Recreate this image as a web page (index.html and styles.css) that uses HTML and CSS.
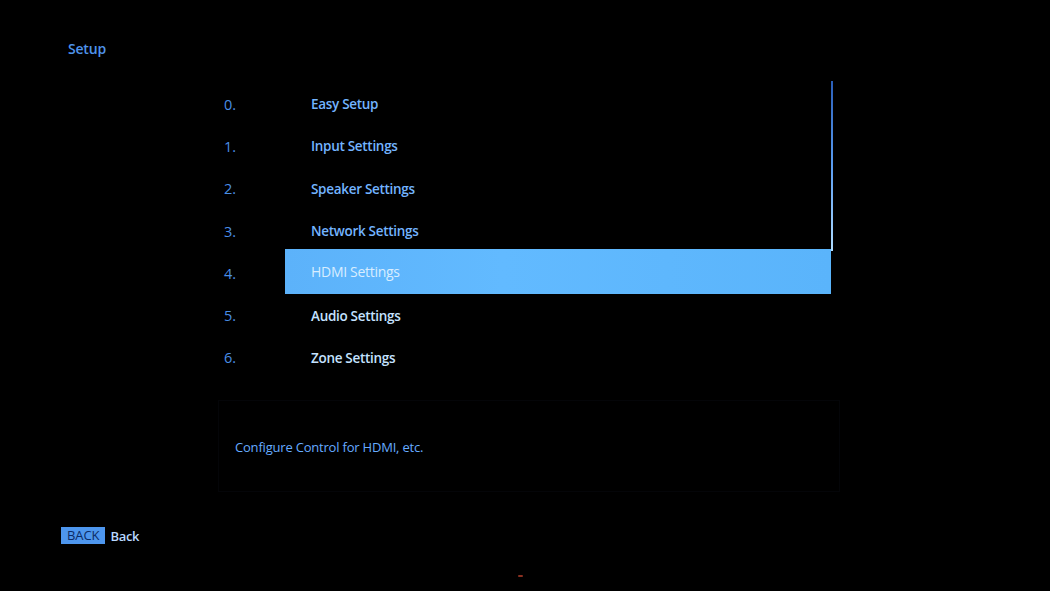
FILE: index.html
```html
<!DOCTYPE html>
<html>
<head>
<meta charset="utf-8">
<link rel="stylesheet" href="styles.css">
</head>
<body>
<div class="screen">
  <header class="title">Setup</header>
  <main class="menu-area">
    <div class="menu-wrap">
      <ul class="menu">
        <li class="row"><span class="num">0.</span><span class="label">Easy Setup</span></li>
        <li class="row"><span class="num">1.</span><span class="label">Input Settings</span></li>
        <li class="row"><span class="num">2.</span><span class="label">Speaker Settings</span></li>
        <li class="row"><span class="num">3.</span><span class="label">Network Settings</span></li>
        <li class="row selected"><span class="num">4.</span><span class="label">HDMI Settings</span></li>
        <li class="row bright"><span class="num">5.</span><span class="label">Audio Settings</span></li>
        <li class="row bright"><span class="num">6.</span><span class="label">Zone Settings</span></li>
      </ul>
      <div class="scroll"><div class="thumb"></div></div>
    </div>
    <div class="desc">Configure Control for HDMI, etc.</div>
  </main>
  <footer class="footer">
    <span class="badge">BACK</span><span class="back">Back</span>
  </footer>
  <span class="led"></span>
</div>
</body>
</html>
```
FILE: styles.css
```css
html, body {
  margin: 0;
  padding: 0;
  background: #000;
}
.screen {
  position: relative;
  width: 1050px;
  height: 591px;
  background: #000;
  font-family: "Open Sans", "Noto Sans", sans-serif;
  font-weight: 600;
  overflow: hidden;
}
.title {
  padding: 39px 0 0 68px;
  height: 20px;
  line-height: 20px;
  font-size: 14px;
  color: #4f93ea;
  letter-spacing: -0.2px;
}
.menu-area {
  margin-left: 218px;
  width: 622px;
}
.menu-wrap {
  display: flex;
  margin-top: 24px;
}
.menu {
  list-style: none;
  margin: 0;
  padding: 0;
  width: 613px;
}
.row {
  display: flex;
  align-items: center;
  height: 42.3px;
}
.num {
  width: 67px;
  padding-left: 6px;
  box-sizing: border-box;
  font-size: 14.5px;
  color: #4a8ee6;
  font-weight: 400;
}
.label {
  flex: 1;
  height: 100%;
  display: flex;
  align-items: center;
  padding-left: 26px;
  font-size: 13.5px;
  color: #73b4ff;
  letter-spacing: -0.3px;
}
.row.bright .label {
  color: #c4e2ff;
}
.row.selected .label {
  height: 45px;
  margin-top: -3px;
  background: linear-gradient(90deg, #5cb2fa 0%, #62baff 40%, #5ab4fb 100%);
  color: #d8edff;
  font-weight: 500;
  font-size: 14px;
}
.scroll {
  width: 9px;
  position: relative;
}
.thumb {
  margin-top: -2px;
  margin-left: 0;
  width: 1.5px;
  height: 170px;
  background: linear-gradient(180deg, #2a5eb8 0%, #5a9cf0 50%, #b0dcff 100%);
}
.desc {
  margin-top: 21px;
  height: 92px;
  border: 1px solid #040508;
  box-sizing: border-box;
  display: flex;
  align-items: center;
  padding-left: 16px;
  padding-top: 2px;
  font-size: 13px;
  color: #66abff;
  letter-spacing: -0.2px;
  font-weight: 500;
}
.footer {
  display: flex;
  align-items: center;
  margin-top: 35px;
  margin-left: 61px;
  height: 17px;
}
.badge {
  background: #4d96ee;
  color: #0c2c66;
  font-size: 13px;
  font-weight: 400;
  line-height: 17px;
  padding: 0 6px 0 6px;
  letter-spacing: -0.1px;
}
.back {
  margin-left: 5px;
  color: #b8d8ff;
  font-size: 13px;
  letter-spacing: -0.3px;
}
.led {
  position: absolute;
  left: 518px;
  top: 575px;
  width: 5px;
  height: 2px;
  background: #8a3020;
  border-radius: 1px;
}
```
